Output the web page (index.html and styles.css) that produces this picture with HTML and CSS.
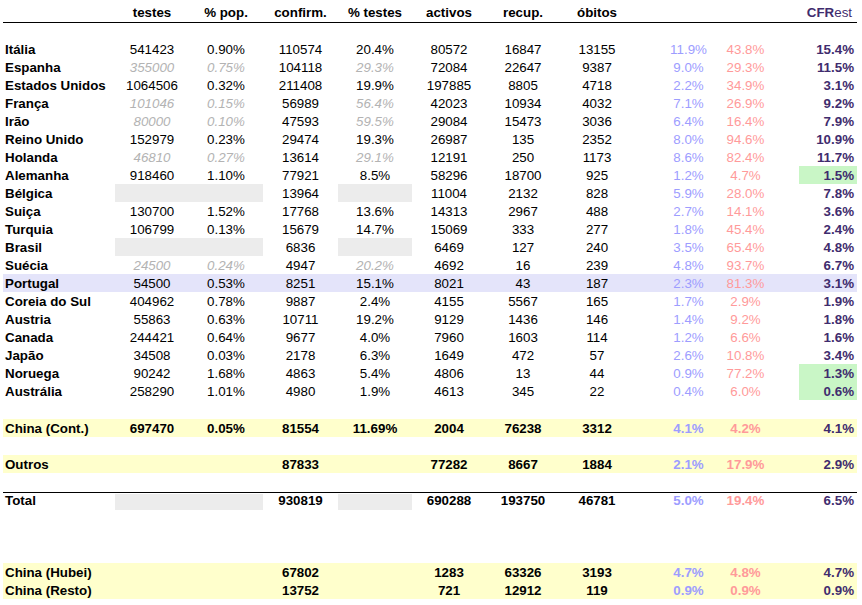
FILE: index.html
```html
<!DOCTYPE html>
<html lang="pt">
<head>
<meta charset="utf-8">
<title>COVID-19</title>
<link rel="stylesheet" href="styles.css">
</head>
<body>
<div class="sheet">
  <div class="row head">
    <span></span><span>testes</span><span>% pop.</span><span>confirm.</span><span>% testes</span><span>activos</span><span>recup.</span><span>óbitos</span>
    <span class="cfr hcfr"><b>CFR</b>est</span>
  </div>
  <div class="sp17"></div>

  <div class="row"><span class="lbl">Itália</span><span>541423</span><span>0.90%</span><span>110574</span><span>20.4%</span><span>80572</span><span>16847</span><span>13155</span><span class="b">11.9%</span><span class="r">43.8%</span><span class="cfr">15.4%</span></div>
  <div class="row"><span class="lbl">Espanha</span><span class="i">355000</span><span class="i">0.75%</span><span>104118</span><span class="i">29.3%</span><span>72084</span><span>22647</span><span>9387</span><span class="b">9.0%</span><span class="r">29.3%</span><span class="cfr">11.5%</span></div>
  <div class="row"><span class="lbl">Estados Unidos</span><span>1064506</span><span>0.32%</span><span>211408</span><span>19.9%</span><span>197885</span><span>8805</span><span>4718</span><span class="b">2.2%</span><span class="r">34.9%</span><span class="cfr">3.1%</span></div>
  <div class="row"><span class="lbl">França</span><span class="i">101046</span><span class="i">0.15%</span><span>56989</span><span class="i">56.4%</span><span>42023</span><span>10934</span><span>4032</span><span class="b">7.1%</span><span class="r">26.9%</span><span class="cfr">9.2%</span></div>
  <div class="row"><span class="lbl">Irão</span><span class="i">80000</span><span class="i">0.10%</span><span>47593</span><span class="i">59.5%</span><span>29084</span><span>15473</span><span>3036</span><span class="b">6.4%</span><span class="r">16.4%</span><span class="cfr">7.9%</span></div>
  <div class="row"><span class="lbl">Reino Unido</span><span>152979</span><span>0.23%</span><span>29474</span><span>19.3%</span><span>26987</span><span>135</span><span>2352</span><span class="b">8.0%</span><span class="r">94.6%</span><span class="cfr">10.9%</span></div>
  <div class="row"><span class="lbl">Holanda</span><span class="i">46810</span><span class="i">0.27%</span><span>13614</span><span class="i">29.1%</span><span>12191</span><span>250</span><span>1173</span><span class="b">8.6%</span><span class="r">82.4%</span><span class="cfr">11.7%</span></div>
  <div class="row"><span class="lbl">Alemanha</span><span>918460</span><span>1.10%</span><span>77921</span><span>8.5%</span><span>58296</span><span>18700</span><span>925</span><span class="b">1.2%</span><span class="r">4.7%</span><span class="cfr green">1.5%</span></div>
  <div class="row"><span class="lbl">Bélgica</span><span class="grey span2"></span><span>13964</span><span class="grey"></span><span>11004</span><span>2132</span><span>828</span><span class="b">5.9%</span><span class="r">28.0%</span><span class="cfr">7.8%</span></div>
  <div class="row"><span class="lbl">Suiça</span><span>130700</span><span>1.52%</span><span>17768</span><span>13.6%</span><span>14313</span><span>2967</span><span>488</span><span class="b">2.7%</span><span class="r">14.1%</span><span class="cfr">3.6%</span></div>
  <div class="row"><span class="lbl">Turquia</span><span>106799</span><span>0.13%</span><span>15679</span><span>14.7%</span><span>15069</span><span>333</span><span>277</span><span class="b">1.8%</span><span class="r">45.4%</span><span class="cfr">2.4%</span></div>
  <div class="row"><span class="lbl">Brasil</span><span class="grey span2"></span><span>6836</span><span class="grey"></span><span>6469</span><span>127</span><span>240</span><span class="b">3.5%</span><span class="r">65.4%</span><span class="cfr">4.8%</span></div>
  <div class="row"><span class="lbl">Suécia</span><span class="i">24500</span><span class="i">0.24%</span><span>4947</span><span class="i">20.2%</span><span>4692</span><span>16</span><span>239</span><span class="b">4.8%</span><span class="r">93.7%</span><span class="cfr">6.7%</span></div>
  <div class="row hl"><span class="lbl">Portugal</span><span>54500</span><span>0.53%</span><span>8251</span><span>15.1%</span><span>8021</span><span>43</span><span>187</span><span class="b">2.3%</span><span class="r">81.3%</span><span class="cfr">3.1%</span></div>
  <div class="row"><span class="lbl">Coreia do Sul</span><span>404962</span><span>0.78%</span><span>9887</span><span>2.4%</span><span>4155</span><span>5567</span><span>165</span><span class="b">1.7%</span><span class="r">2.9%</span><span class="cfr">1.9%</span></div>
  <div class="row"><span class="lbl">Austria</span><span>55863</span><span>0.63%</span><span>10711</span><span>19.2%</span><span>9129</span><span>1436</span><span>146</span><span class="b">1.4%</span><span class="r">9.2%</span><span class="cfr">1.8%</span></div>
  <div class="row"><span class="lbl">Canada</span><span>244421</span><span>0.64%</span><span>9677</span><span>4.0%</span><span>7960</span><span>1603</span><span>114</span><span class="b">1.2%</span><span class="r">6.6%</span><span class="cfr">1.6%</span></div>
  <div class="row"><span class="lbl">Japão</span><span>34508</span><span>0.03%</span><span>2178</span><span>6.3%</span><span>1649</span><span>472</span><span>57</span><span class="b">2.6%</span><span class="r">10.8%</span><span class="cfr">3.4%</span></div>
  <div class="row"><span class="lbl">Noruega</span><span>90242</span><span>1.68%</span><span>4863</span><span>5.4%</span><span>4806</span><span>13</span><span>44</span><span class="b">0.9%</span><span class="r">77.2%</span><span class="cfr green">1.3%</span></div>
  <div class="row"><span class="lbl">Austrália</span><span>258290</span><span>1.01%</span><span>4980</span><span>1.9%</span><span>4613</span><span>345</span><span>22</span><span class="b">0.4%</span><span class="r">6.0%</span><span class="cfr green">0.6%</span></div>

  <div class="sp19"></div>
  <div class="row sum yellow"><span class="lbl">China (Cont.)</span><span>697470</span><span>0.05%</span><span>81554</span><span>11.69%</span><span>2004</span><span>76238</span><span>3312</span><span class="b">4.1%</span><span class="r">4.2%</span><span class="cfr">4.1%</span></div>
  <div class="sp18"></div>
  <div class="row sum yellow"><span class="lbl">Outros</span><span></span><span></span><span>87833</span><span></span><span>77282</span><span>8667</span><span>1884</span><span class="b">2.1%</span><span class="r">17.9%</span><span class="cfr">2.9%</span></div>
  <div class="sp19"></div>
  <div class="row sum total"><span class="lbl">Total</span><span class="grey span2"></span><span>930819</span><span class="grey"></span><span>690288</span><span>193750</span><span>46781</span><span class="b">5.0%</span><span class="r">19.4%</span><span class="cfr">6.5%</span></div>
  <div class="sp52"></div>
  <div class="row sum yellow"><span class="lbl">China (Hubei)</span><span></span><span></span><span>67802</span><span></span><span>1283</span><span>63326</span><span>3193</span><span class="b">4.7%</span><span class="r">4.8%</span><span class="cfr">4.7%</span></div>
  <div class="row sum yellow"><span class="lbl">China (Resto)</span><span></span><span></span><span>13752</span><span></span><span>721</span><span>12912</span><span>119</span><span class="b">0.9%</span><span class="r">0.9%</span><span class="cfr">0.9%</span></div>
</div>
</body>
</html>
```

FILE: styles.css
```css
html, body {
  margin: 0;
  padding: 0;
  background: #ffffff;
}

body {
  font-family: "Liberation Sans", Arial, sans-serif;
  font-size: 13.33px;
  color: #000000;
}

.sheet {
  margin-left: 3px;
  width: 854px;
}

.row {
  display: grid;
  grid-template-columns: 112px 74px 74px 75px 74px 74px 74px 74px 26px 57px 57px 25px 58px;
  grid-template-rows: 18px;
  height: 18px;
}

.row > span {
  display: flex;
  align-items: center;
  justify-content: center;
  white-space: nowrap;
}

.row > .lbl {
  justify-content: flex-start;
  padding-left: 2px;
  font-weight: bold;
}

.head {
  height: 22px;
  grid-template-rows: 22px;
  border-bottom: 1px solid #000000;
  font-weight: bold;
}

.head > span {
  padding-top: 2px;
}

.sp17 { height: 17px; }
.sp18 { height: 18px; }
.sp19 { height: 19px; }
.sp52 { height: 52px; }

.i {
  font-style: italic;
  color: #b3b3b3;
}

.grey {
  background: #ececec;
}

.span2 {
  grid-column: span 2;
}

.b {
  grid-column: 10;
  color: #9d9dff;
}

.r {
  grid-column: 11;
  color: #ff9a9a;
}

.row > .cfr {
  grid-column: 13;
  justify-content: flex-end;
  padding-right: 3px;
  font-weight: bold;
  color: #3f2c6e;
}

.row > .hcfr {
  font-weight: normal;
  padding-right: 5px;
}

.hcfr b {
  font-weight: bold;
}

.green {
  background: #c9f6c6;
}

.hl {
  background: #e4e4fa;
}

.yellow {
  background: #ffffcc;
}

.sum {
  font-weight: bold;
}

.total {
  border-top: 1px solid #000000;
}

.total > span {
  padding-bottom: 3px;
}

.total > .grey {
  margin: 1px 0;
  padding-bottom: 0;
}
```
